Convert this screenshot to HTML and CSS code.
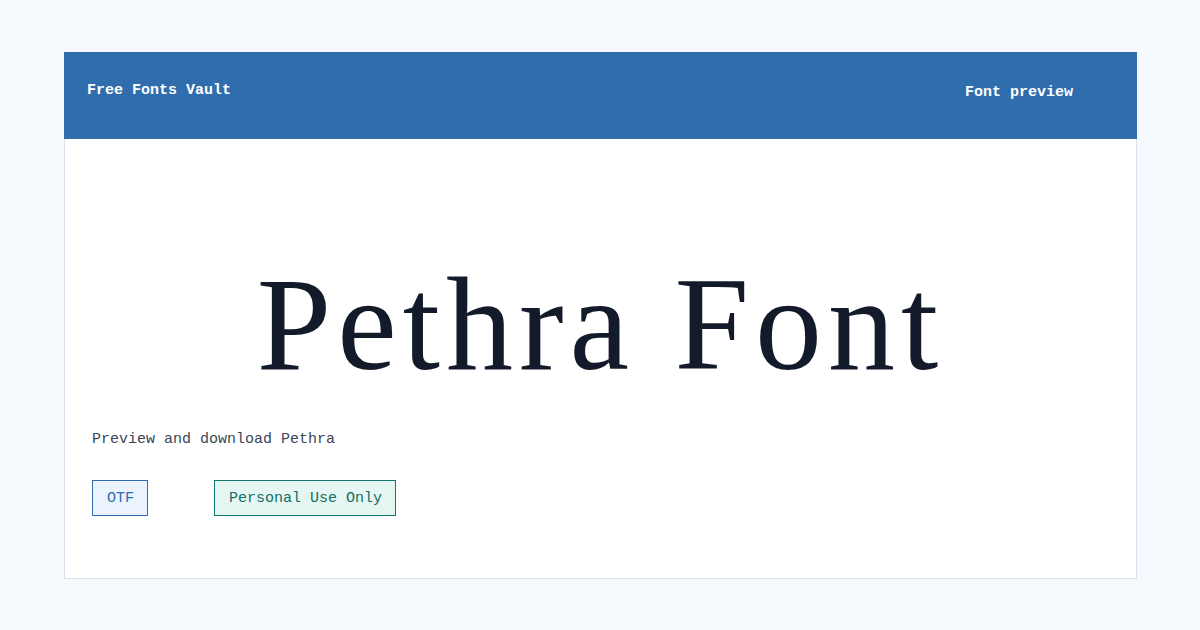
FILE: index.html
```html
<!DOCTYPE html>
<html lang="en">
<head>
  <meta charset="UTF-8">
  <title>Pethra Font - Free Fonts Vault</title>
  <meta name="viewport" content="width=device-width, initial-scale=1.0">
  <link rel="stylesheet" href="styles.css">
</head>
<body>

<div class="card">
  <div class="header">
    <span class="brand">Free Fonts Vault</span>
    <span class="section">Font preview</span>
  </div>

  <div class="content">
    <h1 class="sample">Pethra Font</h1>
    <p class="subtitle">Preview and download Pethra</p>
    <div class="tags">
      <span class="tag tag-format">OTF</span>
      <span class="tag tag-license">Personal Use Only</span>
    </div>
  </div>
</div>

</body>
</html>
```

FILE: styles.css
```css
body {
  margin: 0;
  padding: 52px 63px 0 64px;
  background: #f6f9fe;
  font-family: "Liberation Mono", monospace;
}
.card {
  height: 526px;
  background: white;
  border: 1px solid #d7e1ec;
  border-top: none;
}
.header {
  display: flex;
  justify-content: space-between;
  align-items: flex-start;
  height: 87px;
  box-sizing: border-box;
  padding: 30px 64px 0 23px;
  margin: 0 -1px;
  background: #2f6dad;
  color: white;
  font-size: 15px;
  font-weight: bold;
}
.section {
  margin-top: 2px;
}
.content {
  padding: 0 27px;
}
.sample {
  margin: 110px 0 0;
  text-align: center;
  font-family: "Liberation Serif", serif;
  font-weight: normal;
  font-size: 134px;
  line-height: 150px;
  color: #131a29;
  letter-spacing: 6px;
}
.subtitle {
  margin: 32px 0 0;
  font-size: 15px;
  color: #3b4658;
}
.tags {
  display: flex;
  gap: 66px;
  margin-top: 32px;
}
.tag {
  padding: 9px 13px 8px 14px;
  font-size: 15px;
  line-height: 17px;
  border: 1px solid;
}
.tag-format {
  color: #2f6dad;
  background: #eaf3fe;
  border-color: #2f6dad;
}
.tag-license {
  color: #0f6e62;
  background: #e6f6f2;
  border-color: #0f7a6c;
}
```
